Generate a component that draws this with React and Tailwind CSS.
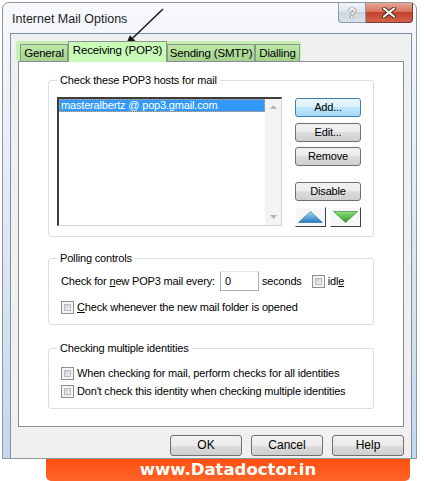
import React from "react";

const btn =
  "h-[19px] w-[66px] rounded-[3px] border border-[#707070] bg-[linear-gradient(#f2f2f2,#ebebeb_50%,#dddddd_50%,#cfcfcf)] text-center leading-[17px]";

const Check = () => (
  <div className="w-[13px] h-[13px] shrink-0 border border-[#8e8f8f] bg-[#f4f4f4] p-[2px]">
    <div className="w-full h-full border border-[#b8bcc2] bg-gradient-to-br from-[#c9cdd3] to-[#f2f3f4]"></div>
  </div>
);

const Group = ({ title, className = "", children }) => (
  <fieldset className={"border border-[#d5dfe5] rounded-[3px] px-[8px] " + className}>
    <legend className="px-[3px] leading-[13px]">{title}</legend>
    {children}
  </fieldset>
);

const Tab = ({ label, w, active }) =>
  active ? (
    <div
      className={`relative z-10 h-[21px] -mb-[1px] border border-b-0 border-[#8a9a8a] bg-[#c8fbb8] text-center text-[11.5px] leading-[17px] ${w}`}
    >
      {label}
    </div>
  ) : (
    <div
      className={`h-[17px] border border-b-0 border-[#8a9a8a] bg-[linear-gradient(#bde8a9,#a2d38b)] text-center text-[11.5px] leading-[17px] ${w}`}
    >
      {label}
    </div>
  );

export default function App() {
  return (
    <div className="relative w-[424px] h-[481px] bg-white overflow-hidden font-['Liberation_Sans',Arial,sans-serif] text-[11px] leading-[13px] tracking-[-0.17px] text-black">
      {/* Window */}
      <div className="ml-[2px] mt-[2px] w-[415px] h-[457px] flex flex-col rounded-t-[7px] border border-[#8c96a2] bg-[linear-gradient(#f7f9fc,#e3ebf5_40%,#c4d7ec)]">
        {/* Title bar */}
        <div className="flex h-[30px] shrink-0">
          <div className="pl-[9px] pt-[9px] text-[12.5px] tracking-normal leading-[15px] text-[#1e1e1e]">
            Internet Mail Options
          </div>
          <div className="ml-auto mr-[3px] flex h-[20px]">
            <div className="w-[28px] rounded-bl-[4px] border border-t-0 border-[#8e9aa8] bg-[linear-gradient(#f2f5f9,#dde4ec_50%,#cdd6e1_50%,#d8e0ea)] flex items-center justify-center text-[14px] leading-[16px] font-bold text-white [text-shadow:0_0_1px_#333,0_0_1px_#333]">
              ?
            </div>
            <div className="w-[47px] rounded-br-[4px] border border-t-0 border-l-0 border-[#7d3a30] bg-[linear-gradient(#e8a798,#d6735d_45%,#c4412a_50%,#d0634a)] flex items-center justify-center">
              <svg width="14" height="11" viewBox="0 0 14 11">
                <path d="M2 1.5 L12 9.5 M12 1.5 L2 9.5" stroke="#4a2a24" strokeWidth="4" strokeLinecap="round" />
                <path d="M2 1.5 L12 9.5 M12 1.5 L2 9.5" stroke="#ffffff" strokeWidth="2.2" strokeLinecap="round" />
              </svg>
            </div>
          </div>
        </div>

        {/* Client area */}
        <div className="flex-1 ml-[7px] mr-[4px] border border-b-0 border-[#7f90a3] bg-[#f0f0f0] px-[7px] pt-[7px] flex flex-col">
          {/* Tabs */}
          <div className="flex items-end h-[20px] w-[285px] -ml-[2px] pl-[4px] rounded-[3px] bg-[#c6efb3]">
            <Tab label="General" w="w-[48px]" />
            <Tab label="Receiving (POP3)" w="w-[99px]" active />
            <Tab label="Sending (SMTP)" w="w-[88px]" />
            <Tab label="Dialling" w="w-[45px]" />
          </div>

          {/* Tab panel */}
          <div className="h-[366px] border border-[#898c95] bg-white px-[29px] pt-[12px] flex flex-col">
            <Group title="Check these POP3 hosts for mail" className="pb-[9px] pr-[11px]">
              <div className="flex mt-[10px]">
                {/* Listbox */}
                <div className="w-[225px] h-[129px] flex border-t-2 border-l-2 border-t-[#3c3c3c] border-l-[#3c3c3c] border-r border-b border-r-[#d4d4d4] border-b-[#d4d4d4]">
                  <div className="flex-1">
                    <div className="h-[13px] bg-[#3399ff] border border-dotted border-[#f2a04a] text-white leading-[11px] pl-[1px] whitespace-nowrap">
                      masteralbertz @ pop3.gmail.com
                    </div>
                  </div>
                  <div className="w-[16px] bg-[#f3f3f3] flex flex-col items-center justify-between py-[6px]">
                    <svg width="7" height="4" viewBox="0 0 7 4">
                      <path d="M0 4 L3.5 0 L7 4 Z" fill="#b4b4b4" />
                    </svg>
                    <svg width="7" height="4" viewBox="0 0 7 4">
                      <path d="M0 0 L3.5 4 L7 0 Z" fill="#b4b4b4" />
                    </svg>
                  </div>
                </div>
                {/* Buttons */}
                <div className="ml-[13px] flex flex-col pt-[1px]">
                  <div className="h-[19px] w-[66px] rounded-[3px] border border-[#3c7fb1] bg-[linear-gradient(#eaf6fd,#d9f0fc_50%,#bee6fd_50%,#a7d9f5)] text-center leading-[17px]">
                    Add...
                  </div>
                  <div className={btn + " mt-[6px]"}>Edit...</div>
                  <div className={btn + " mt-[5px]"}>Remove</div>
                  <div className={btn + " mt-[16px]"}>Disable</div>
                  <div className="flex gap-[4px] mt-[6px]">
                    <div className="w-[31px] h-[20px] border border-t-white border-l-white border-r-[#404040] border-b-[#404040] bg-[#f7f7f7] flex items-center justify-center">
                      <svg width="25" height="12" viewBox="0 0 25 12">
                        <defs>
                          <linearGradient id="up" x1="0" y1="0" x2="0" y2="1">
                            <stop offset="0" stopColor="#a8dcf5" />
                            <stop offset="1" stopColor="#1f79c2" />
                          </linearGradient>
                        </defs>
                        <path d="M0.5 11.5 L12.5 0.5 L24.5 11.5 Z" fill="url(#up)" stroke="#2a6aa0" strokeWidth="0.6" />
                      </svg>
                    </div>
                    <div className="w-[31px] h-[20px] border border-t-white border-l-white border-r-[#404040] border-b-[#404040] bg-[#f7f7f7] flex items-center justify-center">
                      <svg width="25" height="12" viewBox="0 0 25 12">
                        <defs>
                          <linearGradient id="down" x1="0" y1="0" x2="0" y2="1">
                            <stop offset="0" stopColor="#8fe07a" />
                            <stop offset="1" stopColor="#2f9a2a" />
                          </linearGradient>
                        </defs>
                        <path d="M0.5 0.5 L24.5 0.5 L12.5 11.5 Z" fill="url(#down)" stroke="#2c7a2a" strokeWidth="0.6" />
                      </svg>
                    </div>
                  </div>
                </div>
              </div>
            </Group>

            <Group title="Polling controls" className="mt-[15px] pb-[10px]">
              <div className="flex items-center h-[20px] mt-[6px] pl-[4px]">
                <span>
                  Check for <u>n</u>ew POP3 mail every:
                </span>
                <div className="ml-[5px] w-[39px] h-[20px] border border-[#abadb3] border-t-[#e3e9ef] bg-white pl-[4px] leading-[18px]">
                  0
                </div>
                <span className="ml-[3px]">seconds</span>
                <div className="ml-[10px] flex items-center gap-[3px]">
                  <Check />
                  <span>
                    idl<u>e</u>
                  </span>
                </div>
              </div>
              <div className="flex items-center gap-[3px] mt-[10px] pl-[4px]">
                <Check />
                <span>
                  <u>C</u>heck whenever the new mail folder is opened
                </span>
              </div>
            </Group>

            <Group title="Checking multiple identities" className="mt-[17px] pb-[10px]">
              <div className="flex items-center gap-[3px] mt-[12px] pl-[4px]">
                <Check />
                <span>When checking for mail, perform checks for all identities</span>
              </div>
              <div className="flex items-center gap-[3px] mt-[5px] pl-[4px]">
                <Check />
                <span>Don't check this identity when checking multiple identities</span>
              </div>
            </Group>
          </div>

          {/* Dialog buttons */}
          <div className="flex justify-end gap-[9px] mt-[8px] text-[12px] tracking-normal">
            <div className="w-[72px] h-[21px] rounded-[3px] border border-[#707070] bg-[linear-gradient(#f2f2f2,#ebebeb_50%,#dddddd_50%,#cfcfcf)] text-center leading-[19px]">
              OK
            </div>
            <div className="w-[72px] h-[21px] rounded-[3px] border border-[#707070] bg-[linear-gradient(#f2f2f2,#ebebeb_50%,#dddddd_50%,#cfcfcf)] text-center leading-[19px]">
              Cancel
            </div>
            <div className="w-[72px] h-[21px] rounded-[3px] border border-[#707070] bg-[linear-gradient(#f2f2f2,#ebebeb_50%,#dddddd_50%,#cfcfcf)] text-center leading-[19px]">
              Help
            </div>
          </div>
        </div>
      </div>

      {/* Banner */}
      <div className="ml-[46px] w-[364px] h-[22px] rounded-b-[5px] bg-[linear-gradient(#ff5012,#ff6428)] text-center text-white font-['DejaVu_Sans',Verdana,sans-serif] font-bold text-[16.5px] tracking-normal leading-[22px]">
        www.Datadoctor.in
      </div>

      {/* Annotation arrow */}
      <svg className="absolute left-0 top-0 pointer-events-none" width="424" height="481">
        <line x1="163" y1="9" x2="132.8" y2="38.1" stroke="#111" strokeWidth="1.4" />
        <path d="M125.5 45 L135.5 41 L130 35.2 Z" fill="#111" />
      </svg>
    </div>
  );
}
